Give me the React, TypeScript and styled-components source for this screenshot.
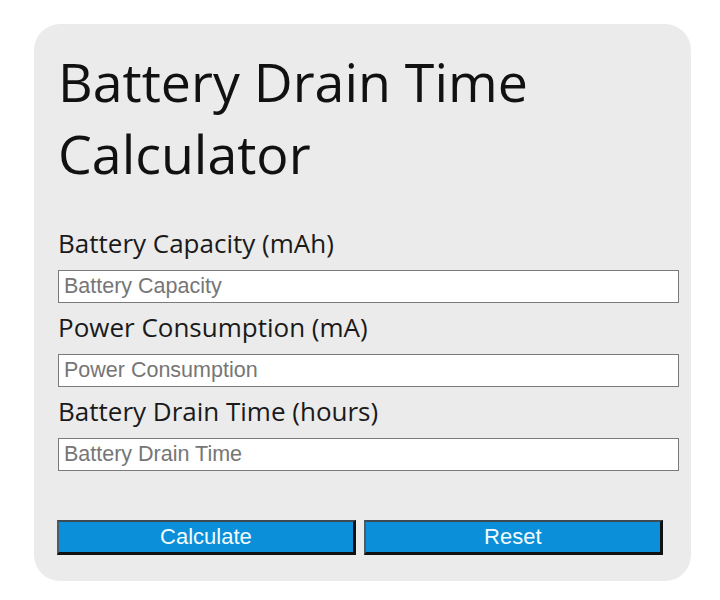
import React from 'react'
import styled, { createGlobalStyle } from 'styled-components'

const GlobalStyle = createGlobalStyle`
  body {
    margin: 0;
    background: #ffffff;
    font-family: 'Open Sans', 'Noto Sans', sans-serif;
  }
`

const Page = styled.div`
  padding: 24px 29px 20px 34px;
`

const Card = styled.div`
  width: 657px;
  box-sizing: border-box;
  background: #ebebeb;
  border-radius: 26px;
  padding: 22px 24px 26px 24px;
`

const Title = styled.h1`
  margin: 0 0 36px;
  font-size: 53.7px;
  font-weight: 400;
  line-height: 72px;
  color: #111;
`

const Field = styled.div`
  display: flex;
  flex-direction: column;
`

const Label = styled.label`
  font-size: 26px;
  line-height: 34px;
  color: #1a1a1a;
  margin-bottom: 10px;
`

const Input = styled.input`
  width: 100%;
  height: 31px;
  box-sizing: content-box;
  padding: 0 5px;
  margin: 0 0 7px;
  border: 1px solid #7a7a7a;
  background: #fff;
  font-family: 'Liberation Sans', Arial, sans-serif;
  font-size: 21.5px;
  color: #333;

  &::placeholder {
    color: #767676;
  }
`

const Actions = styled.div`
  display: flex;
  gap: 8px;
  margin: 42px 0 0 -1px;
`

const Button = styled.button`
  width: 49%;
  height: 35px;
  box-sizing: border-box;
  background: #0a8fd8;
  border-style: solid;
  border-width: 2px 3px 3px 2px;
  border-color: #3d4a54 #111 #111 #4d5c66;
  color: #f4fbff;
  font-family: 'Liberation Sans', Arial, sans-serif;
  font-size: 22px;
  padding: 0;
  cursor: pointer;
`

const fields = [
  { label: 'Battery Capacity (mAh)', placeholder: 'Battery Capacity' },
  { label: 'Power Consumption (mA)', placeholder: 'Power Consumption' },
  { label: 'Battery Drain Time (hours)', placeholder: 'Battery Drain Time' },
]

export default function App() {
  return (
    <Page>
      <GlobalStyle />
      <Card>
        <Title>Battery Drain Time Calculator</Title>
        {fields.map((f) => (
          <Field key={f.label}>
            <Label>{f.label}</Label>
            <Input type="text" placeholder={f.placeholder} />
          </Field>
        ))}
        <Actions>
          <Button>Calculate</Button>
          <Button>Reset</Button>
        </Actions>
      </Card>
    </Page>
  )
}
